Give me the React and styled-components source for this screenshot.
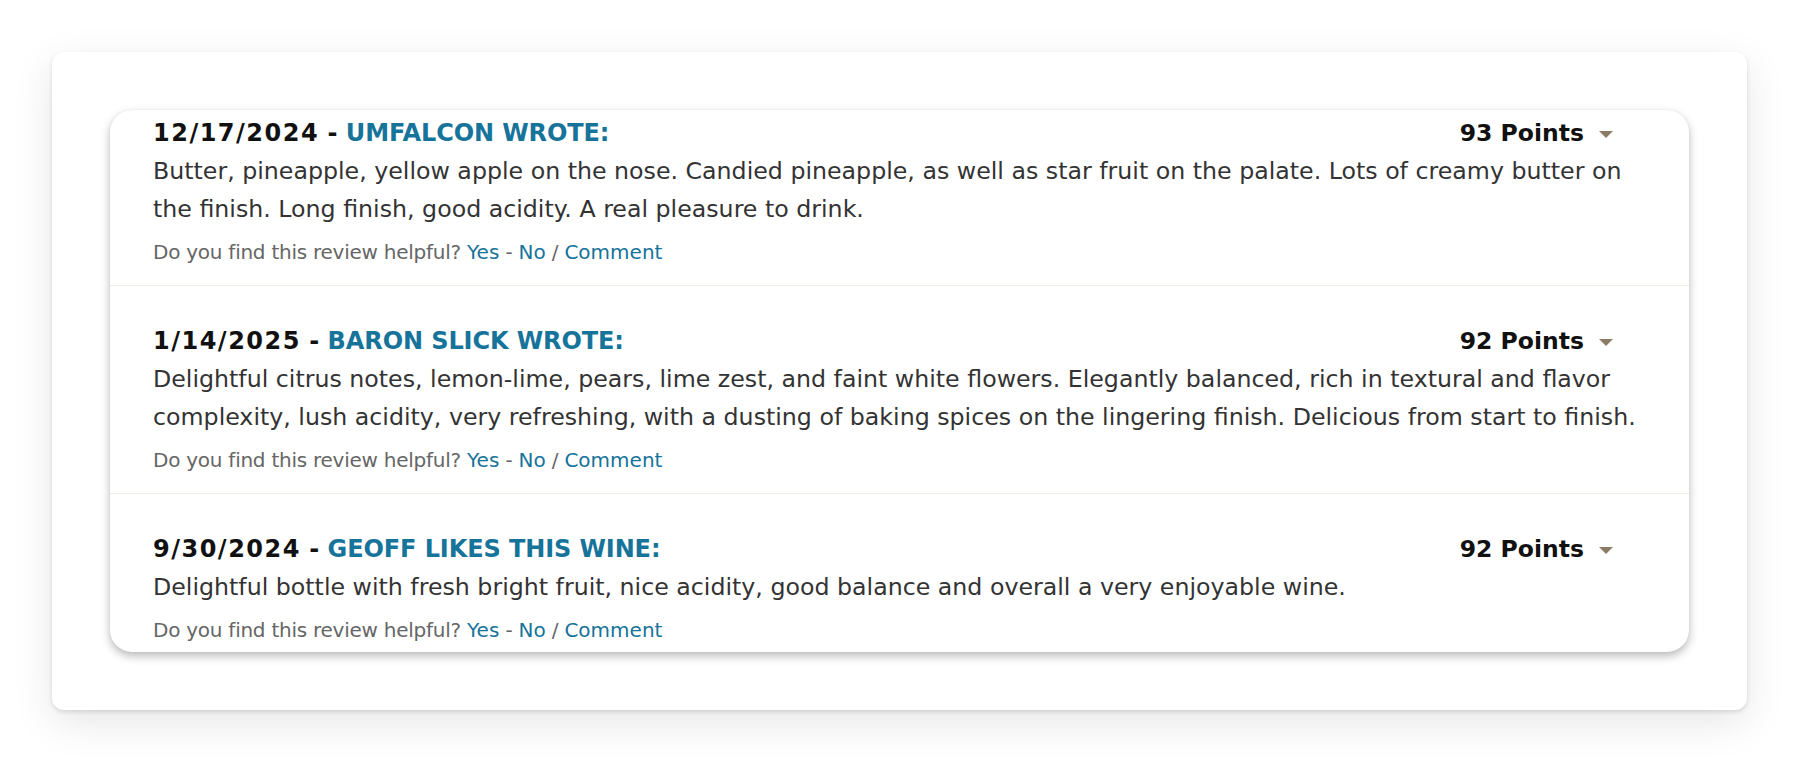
import React from "react";
import styled, { createGlobalStyle } from "styled-components";

const GlobalStyle = createGlobalStyle`
  html, body {
    margin: 0;
    padding: 0;
    background: #ffffff;
  }
  body {
    font-family: "DejaVu Sans", Verdana, sans-serif;
  }
`;

const Page = styled.div`
  padding: 52px 53px 52px 52px;
`;

const Frame = styled.div`
  background: #fff;
  border-radius: 12px;
  padding: 58px;
  box-shadow: 0 12px 40px rgba(0, 0, 0, 0.1), 0 2px 4px rgba(0, 0, 0, 0.12);
`;

const ReviewCard = styled.div`
  background: #fff;
  border-radius: 22px;
  overflow: hidden;
  box-shadow: 0 4px 10px rgba(0, 0, 0, 0.28), 0 0 2px rgba(0, 0, 0, 0.06);
`;

const Review = styled.div`
  padding: 40px 43px 21px;
  border-bottom: 1px solid #efeee7;

  &:first-child {
    padding-top: 8px;
  }
  &:last-child {
    padding-bottom: 10px;
    border-bottom: none;
  }
`;

const HeaderRow = styled.div`
  display: flex;
  align-items: center;
  justify-content: space-between;
  height: 30px;
  margin-bottom: 4px;
`;

const Title = styled.div`
  font-size: 24px;
  font-weight: bold;
  line-height: 30px;
  color: #111;
`;

const DateText = styled.span`
  letter-spacing: 1.5px;
`;

const Author = styled.span`
  color: #16739a;
  text-transform: uppercase;
  letter-spacing: -0.1px;
`;

const Score = styled.div`
  display: flex;
  align-items: center;
  gap: 15px;
  margin-right: 33px;
  font-size: 23.5px;
  font-weight: bold;
  line-height: 30px;
  color: #111;
`;

const Caret = styled.span`
  display: inline-block;
  width: 0;
  height: 0;
  border-left: 7px solid transparent;
  border-right: 7px solid transparent;
  border-top: 7px solid #8c7b67;
  margin-top: 2px;
`;

const Body = styled.p`
  margin: 0;
  font-size: 23.7px;
  line-height: 38px;
  color: #333;
`;

const Helpful = styled.div`
  margin-top: 12px;
  font-size: 20px;
  line-height: 24px;
  color: #666;
  letter-spacing: -0.25px;
`;

const Link = styled.a`
  color: #16739a;
  text-decoration: none;
  letter-spacing: 0;
  cursor: pointer;
`;

const reviews = [
  {
    date: "12/17/2024",
    author: "UMFALCON WROTE:",
    points: 93,
    text:
      "Butter, pineapple, yellow apple on the nose. Candied pineapple, as well as star fruit on the palate. Lots of creamy butter on the finish. Long finish, good acidity. A real pleasure to drink.",
  },
  {
    date: "1/14/2025",
    author: "BARON SLICK WROTE:",
    points: 92,
    text:
      "Delightful citrus notes, lemon-lime, pears, lime zest, and faint white flowers. Elegantly balanced, rich in textural and flavor complexity, lush acidity, very refreshing, with a dusting of baking spices on the lingering finish. Delicious from start to finish.",
  },
  {
    date: "9/30/2024",
    author: "GEOFF LIKES THIS WINE:",
    points: 92,
    text:
      "Delightful bottle with fresh bright fruit, nice acidity, good balance and overall a very enjoyable wine.",
  },
];

export default function App() {
  return (
    <>
      <GlobalStyle />
      <Page>
        <Frame>
          <ReviewCard>
            {reviews.map((r) => (
              <Review key={r.date}>
                <HeaderRow>
                  <Title>
                    <DateText>{r.date}</DateText> - <Author>{r.author}</Author>
                  </Title>
                  <Score>
                    {r.points} Points
                    <Caret />
                  </Score>
                </HeaderRow>
                <Body>{r.text}</Body>
                <Helpful>
                  Do you find this review helpful? <Link>Yes</Link> -{" "}
                  <Link>No</Link> / <Link>Comment</Link>
                </Helpful>
              </Review>
            ))}
          </ReviewCard>
        </Frame>
      </Page>
    </>
  );
}
